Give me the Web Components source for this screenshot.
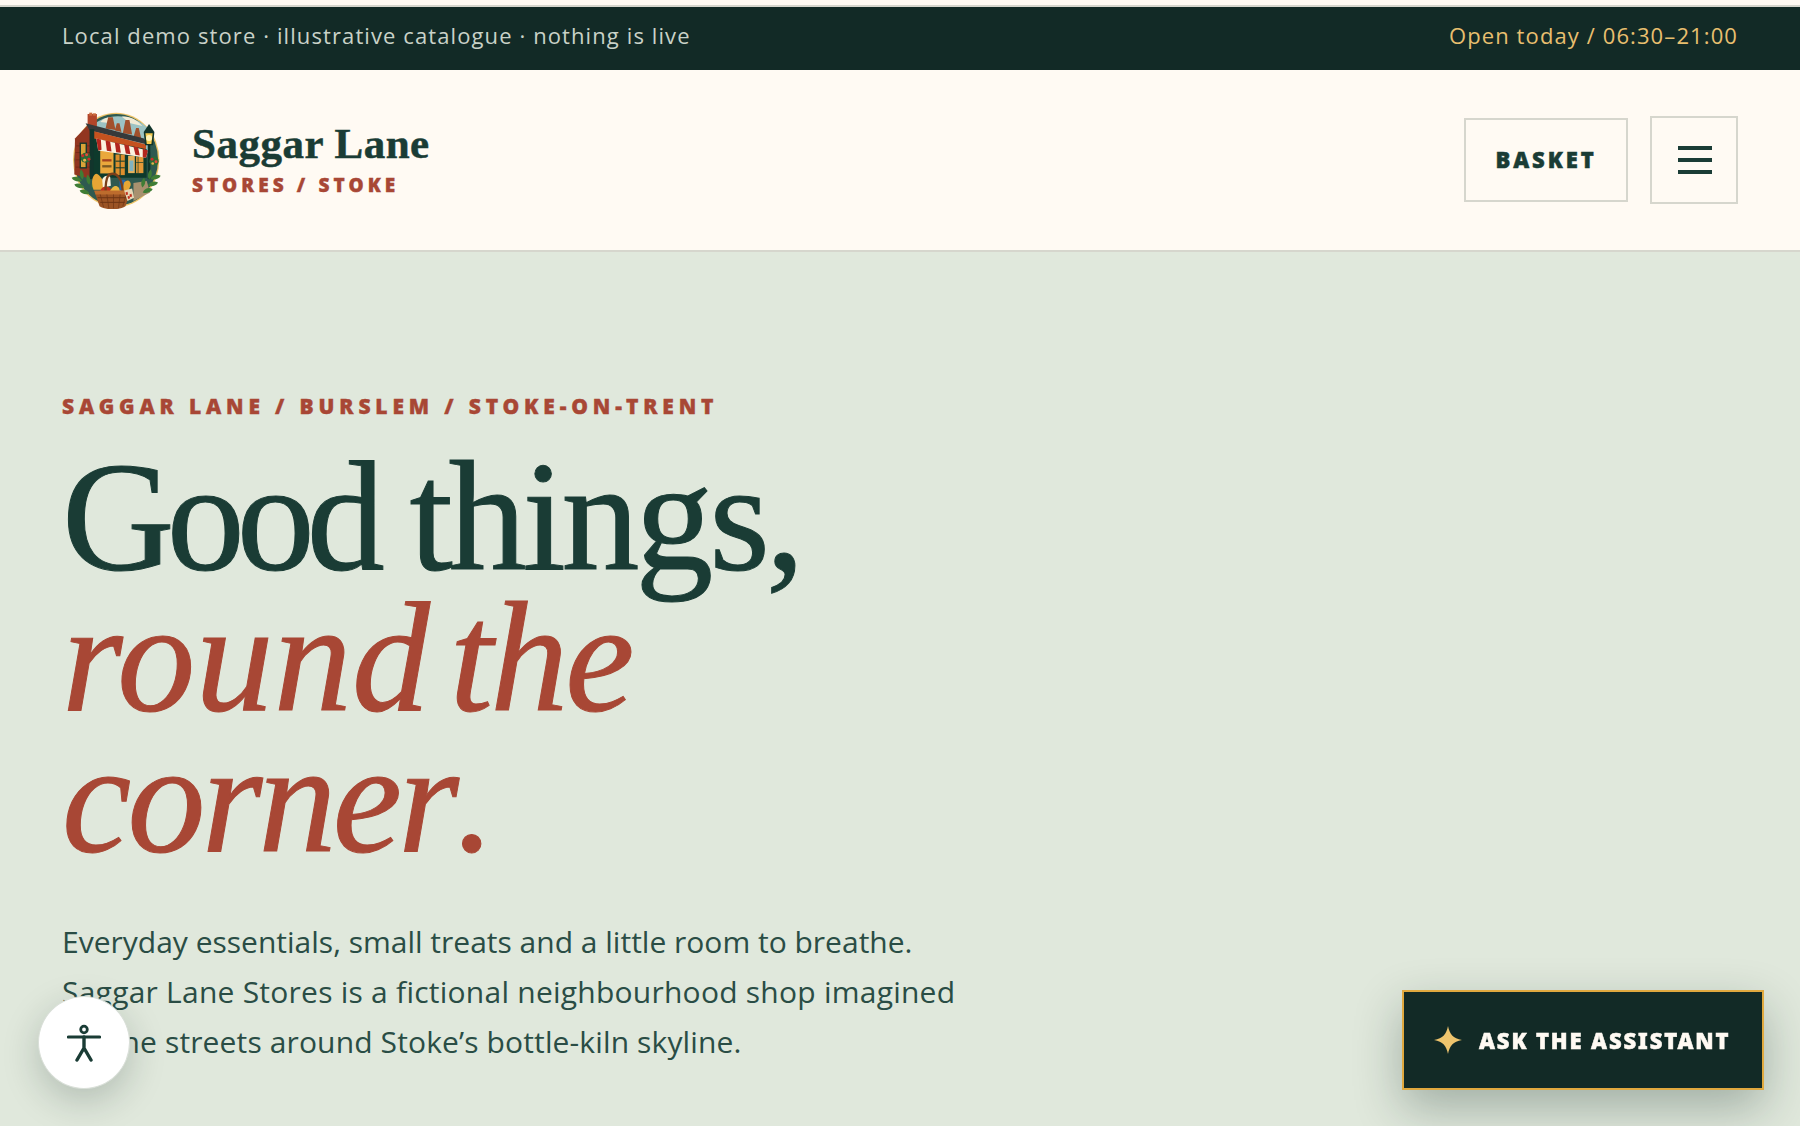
<!doctype html>
<html lang="en">
<head>
<meta charset="utf-8">
<title>Saggar Lane Stores</title>
<style>
  html, body { margin: 0; height: 1126px; overflow: hidden; background: #e0e8dc; }
  body { font-family: "Open Sans", "Noto Sans", sans-serif; }
</style>
</head>
<body>
<top-bar>
  <span>Local demo store · illustrative catalogue · nothing is live</span>
  <span slot="hours">Open today / 06:30–21:00</span>
</top-bar>
<site-header></site-header>
<hero-block></hero-block>
<a11y-button></a11y-button>
<assistant-button></assistant-button>

<script>
class TopBar extends HTMLElement {
  constructor() {
    super();
    this.attachShadow({ mode: 'open' });
    this.shadowRoot.innerHTML = `
      <style>
        :host { display: block; background: #fffaf3; padding-top: 5px; }
        .bar {
          border-top: 2px solid #d6d6cd;
          background: #122a26;
          height: 65px;
          box-sizing: border-box;
          padding: 0 62px 6px;
          display: flex;
          justify-content: space-between;
          align-items: center;
          font: 400 22px/1.3 "Open Sans", sans-serif;
          letter-spacing: 1.1px;
          color: #c9d2c8;
        }
        .hours { color: #e8bf6f; }
      </style>
      <div class="bar">
        <div><slot></slot></div>
        <div class="hours"><slot name="hours"></slot></div>
      </div>
    `;
  }
}

class BrandMark extends HTMLElement {
  constructor() {
    super();
    this.attachShadow({ mode: 'open' });
    this.shadowRoot.innerHTML = `
      <style>
        :host { display: block; width: 92px; height: 98px; }
        svg { display: block; }
      </style>
      <svg width="92" height="98" viewBox="60 45 275 295" aria-label="Saggar Lane logo">
        <ellipse cx="198" cy="192" rx="130" ry="142" fill="#efc468"/>
        <ellipse cx="198" cy="192" rx="126" ry="138" fill="#2f5a50"/>
        <path d="M128 90C160 52 250 46 300 104L300 170H128Z" fill="#9cc3c4"/>
        <path d="M215 62c20-4 44 8 62 28l-36-8zM150 78c10-10 20-14 32-14l-12 16z" fill="#f1ead4"/>
        <path d="M166 98l8-34 14 0 8 38zM194 104l6-22 8 0 6 26zM218 112l8-40 12 0 8 44zM250 124l8-28 8 0 8 34z" fill="#a2512d"/>
        <path d="M114 86L74 128 72 236 124 250 130 100Z" fill="#923620"/>
        <path d="M78 150h42M76 170h44M76 192h44M76 214h44" stroke="#6b2514" stroke-width="2"/>
        <rect x="112" y="54" width="28" height="40" fill="#b2452a"/>
        <rect x="117" y="50" width="9" height="9" fill="#cb6a3e"/>
        <rect x="128" y="52" width="9" height="7" fill="#cb6a3e"/>
        <path d="M106 82L282 128 292 146 118 104Z" fill="#36393a"/>
        <path d="M122 104L288 146 288 166 122 128Z" fill="#c4521f"/>
        <rect x="118" y="100" width="14" height="150" fill="#12352c"/>
        <path d="M130 128L290 160 290 246 130 246Z" fill="#0e3a2c"/>
        <rect x="150" y="165" width="40" height="68" fill="#eaa83c"/>
        <rect x="156" y="190" width="28" height="7" fill="#a5421f"/>
        <rect x="156" y="208" width="28" height="7" fill="#7d5a22"/>
        <rect x="196" y="176" width="28" height="62" fill="#dd8f2d"/>
        <path d="M210 176v62M196 196h28M196 216h28" stroke="#0e3a2c" stroke-width="3"/>
        <rect x="234" y="180" width="20" height="52" fill="#e7b15a"/>
        <rect x="238" y="194" width="12" height="32" fill="#7fb2c0"/>
        <rect x="258" y="182" width="22" height="50" fill="#e59a38"/>
        <path d="M264 182v50M258 200h22" stroke="#0e3a2c" stroke-width="2"/>
        <rect x="90" y="142" width="18" height="74" fill="#d9a338" stroke="#12352c" stroke-width="4"/>
        <path d="M138 128L294 164 288 186 144 164Z" fill="#fbf2df"/>
        <path d="M138 128l14 3 2 31-10 2zM166 134l14 3 4 30-14-2zM194 140l14 3 4 28-14-2zM222 146l14 3 5 26-14-2zM250 152l14 3 5 24-13-2zM278 159l16 5-6 22-10-2z" fill="#b2261e"/>
        <circle cx="106" cy="186" r="15" fill="#2c6a35"/>
        <circle cx="97" cy="180" r="4.500" fill="#cf2b2b"/>
        <circle cx="109" cy="177" r="4.500" fill="#e24d3a"/>
        <circle cx="116" cy="190" r="4.500" fill="#cf2b2b"/>
        <circle cx="103" cy="193" r="4.500" fill="#e8b14d"/>
        <rect x="293" y="145" width="8" height="105" fill="#12352c"/>
        <path d="M281 108l16-24 16 24-4 40-24 0z" fill="#12352c"/>
        <path d="M286 112h22l-4 32h-14z" fill="#f4c94f"/>
        <circle cx="297" cy="126" r="9" fill="#fff3b8"/>
        <circle cx="312" cy="196" r="14" fill="#2c6a35"/>
        <circle cx="306" cy="190" r="4.500" fill="#cf2b2b"/>
        <circle cx="318" cy="198" r="4.500" fill="#e24d3a"/>
        <circle cx="308" cy="203" r="4" fill="#e8b14d"/>
        <path d="M250 262l40-6 10 34-50 26z" fill="#a8916f"/>
        <g fill="#3f7d35">
          <path d="M64 246c13-7 26-1 31 10-13 4-26 0-31-10zM72 266c13-7 26-1 31 10-13 4-26 0-31-10zM88 284c13-7 25-1 30 10-13 4-25 0-30-10zM92 220c9 9 11 22 5 31-9-7-11-20-5-31zM112 236c9 9 11 22 5 31-9-7-11-20-5-31zM128 254c8 9 9 20 3 28-8-7-9-18-3-28z"/>
          <path d="M332 240c-13-7-26-1-31 10 13 4 26 0 31-10zM324 260c-13-7-26-1-31 10 13 4 26 0 31-10zM308 280c-13-7-25-1-30 10 13 4 25 0 30-10zM302 220c-9 9-11 22-5 31 9-7 11-20 5-31zM282 246c-9 8-11 20-5 29 9-7 11-19 5-29z"/>
        </g>
        <path d="M130 282c-10-24-2-46 8-48 12 2 26 26 28 48z" fill="#e7a535"/>
        <path d="M156 252c4-12 16-16 24-8l2 26-24 6z" fill="#fbf2df"/>
        <path d="M150 286c6-18 28-18 36 0z" fill="#c1301f"/>
        <path d="M178 290c6-16 18-26 28-14l10 16z" fill="#e9b63f"/>
        <rect x="208" y="252" width="18" height="32" fill="#2864a8"/>
        <path d="M222 260c8-10 20-8 20 8l-10 24-16-6z" fill="#e7a535"/>
        <path d="M166 290c0-56 12-56 22-56s28 10 30 56" fill="none" stroke="#7a3f1a" stroke-width="7"/>
        <path d="M132 286H242L226 332c-20 12-58 12-78 0Z" fill="#9b5324"/>
        <path d="M132 284H242L239 296H136Z" fill="#bd6c2d"/>
        <path d="M142 306h92M150 320h74" stroke="#6d3414" stroke-width="3"/>
        <path d="M150 296l10 38M170 296l6 42M190 296v42M210 296l-5 42M228 296l-10 36" stroke="#6d3414" stroke-width="2"/>
        <path d="M222 284l24-6 6 28-20 10z" fill="#e8d7b5"/>
        <path d="M226 290l6-2 2 8-6 2zM238 296l6-2 2 8-6 2zM232 302l6-2 2 8-6 2z" fill="#c1301f"/>
      </svg>
    `;
  }
}

class SiteHeader extends HTMLElement {
  constructor() {
    super();
    this.attachShadow({ mode: 'open' });
    this.shadowRoot.innerHTML = `
      <style>
        :host {
          display: flex;
          align-items: center;
          justify-content: space-between;
          box-sizing: border-box;
          height: 182px;
          padding: 0 62px 0 70px;
          background: #fffaf3;
          border-bottom: 2px solid #d6d6cd;
          color: #1a3c35;
        }
        .brand { display: flex; align-items: center; gap: 30px; }
        .name {
          font: 700 43px/46px "Liberation Serif", serif;
          letter-spacing: 0.5px;
          -webkit-text-stroke: 0.5px #1a3c35;
          margin-top: -3px;
        }
        .sub {
          font: 900 19px/24px "Noto Sans", sans-serif;
          letter-spacing: 4.1px;
          color: #a84735;
          -webkit-text-stroke: 0.4px #a84735;
          margin-top: 6px;
        }
        .actions { display: flex; align-items: center; gap: 22px; }
        button {
          background: none;
          border: 2px solid #d6d6cd;
          color: inherit;
          padding: 0;
          margin: 0;
          display: flex;
          align-items: center;
          justify-content: center;
          box-sizing: border-box;
        }
        .basket {
          width: 164px;
          height: 84px;
          padding-bottom: 2px;
          font: 900 22px/1 "Noto Sans", sans-serif;
          letter-spacing: 2.9px;
          -webkit-text-stroke: 0.5px #1a3c35;
        }
        .menu { width: 88px; height: 88px; }
        .menu svg { display: block; margin-left: 2px; }
      </style>
      <div class="brand">
        <brand-mark></brand-mark>
        <div>
          <div class="name">Saggar Lane</div>
          <div class="sub">STORES / STOKE</div>
        </div>
      </div>
      <div class="actions">
        <button class="basket">BASKET</button>
        <button class="menu" aria-label="Menu">
          <svg width="34" height="28" viewBox="0 0 34 28"><path d="M0 2h34M0 14h34M0 26h34" stroke="#1a3c35" stroke-width="4"/></svg>
        </button>
      </div>
    `;
  }
}

class HeroBlock extends HTMLElement {
  constructor() {
    super();
    this.attachShadow({ mode: 'open' });
    this.shadowRoot.innerHTML = `
      <style>
        :host {
          display: block;
          padding: 140px 62px 0;
          color: #1a3c35;
        }
        .eyebrow {
          font: 900 21px/28px "Noto Sans", sans-serif;
          letter-spacing: 4.85px;
          color: #a84735;
          -webkit-text-stroke: 0.4px #a84735;
        }
        h1 {
          font: 400 156px/141px "Liberation Serif", serif;
          letter-spacing: -4.2px;
          word-spacing: -2px;
          margin: 26px 0 0;
          -webkit-text-stroke: 1px #1a3c35;
        }
        .good { letter-spacing: -8px; }
        em {
          display: block;
          color: #a84735;
          font-style: italic;
          letter-spacing: -3.8px;
          -webkit-text-stroke: 1px #a84735;
        }
        .round { letter-spacing: 0.3px; margin-right: -14px; }
        .the { letter-spacing: -2.8px; }
        .dot { margin-left: 1px; }
        p {
          font: 400 30px/50px "Open Sans", sans-serif;
          letter-spacing: 0.24px;
          color: #2a4d45;
          margin: 48px 0 0;
          width: 960px;
        }
        p span { display: block; }
        .tight { letter-spacing: 0; }
        .mid { letter-spacing: 0.13px; }
      </style>
      <div class="eyebrow">SAGGAR LANE / BURSLEM / STOKE-ON-TRENT</div>
      <h1><span class="good">Good</span> things,<em><span class="round">round</span> <span class="the">the</span><br>corner<span class="dot">.</span></em></h1>
      <p><span class="tight">Everyday essentials, small treats and a little room to breathe.</span><span>Saggar Lane Stores is a fictional neighbourhood shop imagined</span><span class="mid">for the streets around Stoke’s bottle-kiln skyline.</span></p>
    `;
  }
}

class A11yButton extends HTMLElement {
  constructor() {
    super();
    this.attachShadow({ mode: 'open' });
    this.shadowRoot.innerHTML = `
      <style>
        :host {
          position: fixed;
          left: 38px;
          top: 996px;
          width: 92px;
          height: 93px;
          box-sizing: border-box;
          border-radius: 50%;
          background: #fff;
          border: 1px solid #d9dfd8;
          box-shadow: 0 12px 36px rgba(18, 42, 38, 0.22);
          display: flex;
          align-items: center;
          justify-content: center;
        }
        svg { display: block; }
      </style>
      <svg width="34" height="38" viewBox="0 0 34 38" fill="none" stroke="#1a3c35" aria-label="Accessibility">
        <circle cx="17" cy="5.500" r="3.300" stroke-width="2.800"/>
        <path d="M1.500 13h31" stroke-width="3.200" stroke-linecap="round"/>
        <path d="M17 13v11M17 24l-7 12M17 24l7 12" stroke-width="3.400" stroke-linecap="round"/>
      </svg>
    `;
  }
}

class AssistantButton extends HTMLElement {
  constructor() {
    super();
    this.attachShadow({ mode: 'open' });
    this.shadowRoot.innerHTML = `
      <style>
        :host {
          position: fixed;
          left: 1402px;
          top: 990px;
          width: 362px;
          height: 100px;
          box-sizing: border-box;
          background: #122a26;
          border: 2px solid #e0a93f;
          box-shadow: 0 18px 48px rgba(18, 42, 38, 0.3);
          display: flex;
          align-items: center;
          gap: 17px;
          padding-left: 30px;
          color: #fffaf3;
          font: 900 22px/1 "Noto Sans", sans-serif;
          letter-spacing: 1.87px;
          -webkit-text-stroke: 0.5px #fffaf3;
        }
        svg { display: block; }
      </style>
      <svg width="28" height="28" viewBox="0 0 28 28"><path d="M14 0c1.500 8 5 12.500 14 14-9 1.500-12.500 6-14 14-1.500-8-5-12.500-14-14 9-1.500 12.500-6 14-14z" fill="#eec46d"/></svg>
      <span>ASK THE ASSISTANT</span>
    `;
  }
}

customElements.define('brand-mark', BrandMark);
customElements.define('top-bar', TopBar);
customElements.define('site-header', SiteHeader);
customElements.define('hero-block', HeroBlock);
customElements.define('a11y-button', A11yButton);
customElements.define('assistant-button', AssistantButton);
</script>
</body>
</html>
